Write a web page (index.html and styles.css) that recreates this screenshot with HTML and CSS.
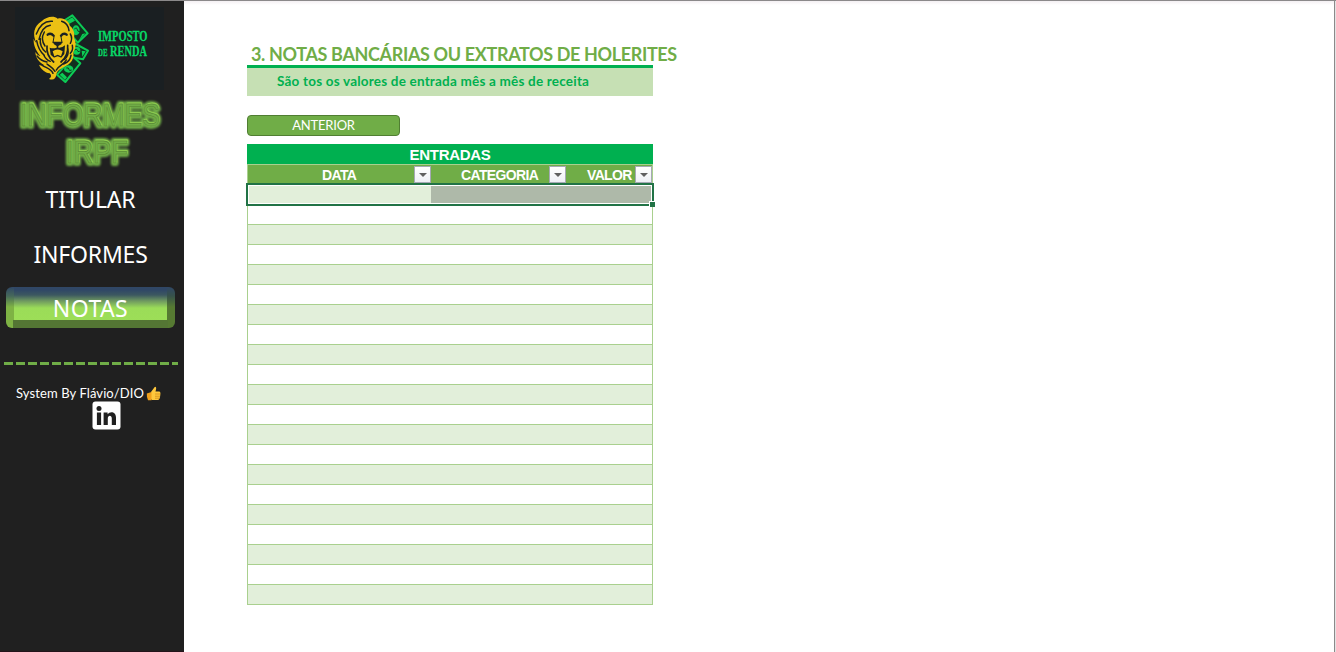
FILE: index.html
```html
<!DOCTYPE html>
<html lang="pt-BR">
<head>
<meta charset="utf-8">
<title>Informes IRPF</title>
<link rel="stylesheet" href="styles.css">
</head>
<body>
<div class="app">
  <aside class="sidebar">
    <svg class="logo" viewBox="15 7 149 83" width="149" height="83">
      <g transform="translate(25 8) scale(.33333)">
        <g fill="#12301f" stroke="#0ccb55" stroke-width="6" stroke-linejoin="round">
          <path d="M120 36L142 22L188 76L158 104L126 66Z"/>
          <path d="M142 112L152 108L189 128L174 154L140 148Z"/>
          <path d="M96 200L144 146L166 166L121 222Z"/>
        </g>
        <g fill="#0ccb55">
          <ellipse cx="153" cy="67" rx="11" ry="15"/>
          <ellipse cx="155" cy="128" rx="11" ry="12"/>
          <ellipse cx="131" cy="183" rx="14" ry="11"/>
          <path d="M124 38L142 28L150 38L132 48ZM172 78L182 76L160 100ZM170 128L182 130L172 146ZM104 200L112 194L126 208L120 216Z"/>
        </g>
        <path d="M148 63q8-6 9 2t8 5M149 126q7-5 8 1t7 3M124 180q8-2 8 4t8 2" fill="none" stroke="#17301f" stroke-width="3"/>
        <path fill="#ecc014" d="M50 40C64 26 86 22 98 32C116 27 132 40 135 54C146 62 150 78 147 90C156 106 151 122 145 132C148 152 138 166 126 172C112 180 96 186 94 200C92 212 86 218 72 213C80 208 80 202 74 196C60 194 48 184 42 170C50 174 54 174 58 172C42 162 32 150 31 132C36 140 42 144 46 144C32 126 25 112 26 92C28 97 30 101 34 104C22 80 26 54 50 40Z"/>
        <g fill="none" stroke="#1a2023" stroke-width="4.5" stroke-linecap="round">
          <path d="M82 40C62 38 44 52 34 78M76 52C60 54 48 68 42 94M35 98C38 116 46 132 58 142M46 92C44 108 50 122 62 132M58 72C50 86 50 100 60 114M36 144C44 154 54 160 66 162M56 140C60 150 66 156 76 160M52 172C64 180 78 182 84 196M66 168C78 178 84 180 90 190M94 186C98 174 116 172 124 156M110 40C124 44 130 54 132 68M136 78C142 88 140 98 136 106M142 112C144 122 142 130 136 136M138 142C136 154 128 164 116 168M128 122C132 136 128 146 118 154"/>
          <path d="M68 80Q77 73 86 83M108 83Q116 73 125 80" stroke-width="7"/>
          <path d="M87 86L84 104M108 86L111 104" stroke-width="3"/>
          <path d="M66 114C64 132 72 150 86 162M128 112C130 132 124 148 108 162" stroke-width="5"/>
        </g>
        <path fill="#1a2023" d="M83 101H112L109 109L100 114V119Q112 120 120 112L118 138L108 150H88L77 140L74 119Q84 122 95 119V114L87 109Z"/>
        <path fill="#ecc014" d="M83 130Q97 119 113 130L108 145L98 140L88 145Z"/>
        <path fill="#ecc014" d="M84 150L98 145L111 150L98 166Z"/>
      </g>
      <g fill="#08d866" stroke="#08d866" stroke-width=".3" font-family="Liberation Serif, serif" font-weight="700">
        <text x="98" y="41" font-size="15" textLength="49.5" lengthAdjust="spacingAndGlyphs">IMPOSTO</text>
        <text x="98" y="56" font-size="10" textLength="9.5" lengthAdjust="spacingAndGlyphs">DE</text>
        <text x="110" y="56" font-size="15" textLength="37" lengthAdjust="spacingAndGlyphs">RENDA</text>
      </g>
    </svg>
    <svg class="brand" width="184" height="84" viewBox="0 90 184 84">
      <defs>
        <filter id="glow" x="-10%" y="-20%" width="120%" height="140%">
          <feGaussianBlur stdDeviation="1.2"/>
        </filter>
      </defs>
      <g class="brand-glow" filter="url(#glow)" aria-hidden="true">
        <text x="20" y="126" textLength="140" lengthAdjust="spacingAndGlyphs">INFORMES</text>
        <text x="66" y="163" textLength="62" lengthAdjust="spacingAndGlyphs">IRPF</text>
      </g>
      <g class="brand-light" aria-hidden="true">
        <text x="20.6" y="124.8" textLength="140" lengthAdjust="spacingAndGlyphs">INFORMES</text>
        <text x="66.6" y="161.8" textLength="62" lengthAdjust="spacingAndGlyphs">IRPF</text>
      </g>
      <g class="brand-face">
        <text x="20" y="125.5" textLength="140" lengthAdjust="spacingAndGlyphs">INFORMES</text>
        <text x="66" y="162.5" textLength="62" lengthAdjust="spacingAndGlyphs">IRPF</text>
      </g>
    </svg>
    <nav class="menu">
      <a class="item titular">TITULAR</a>
      <a class="item informes">INFORMES</a>
      <a class="item active">NOTAS</a>
    </nav>
    <div class="rule"></div>
    <div class="credit">
      <span class="credit-text">System By Flávio/DIO</span>
      <svg width="15" height="15" viewBox="0 0 15 15">
        <path d="M5 6L8.5 1.2Q9.2.2 10 1.2Q10.6 2 9.5 5.4H13.2Q14.4 5.5 14.4 7Q14.3 13.6 12 14H6L5 13Z" fill="#ffc83d"/>
        <path d="M.8 7.5L5.5 6V14.3H2Q.6 12 .8 7.5Z" fill="#f0a01c"/>
        <path d="M9 8H14.3M9 10.2H14M9 12.2H13.4" stroke="#c98214" stroke-width=".7"/>
      </svg>
    </div>
    <svg class="linkedin" width="29" height="29" viewBox="0 0 29 29">
      <rect x=".5" y=".5" width="28" height="28" rx="3" fill="#fff"/>
      <circle cx="7" cy="7.4" r="2.5" fill="#202020"/>
      <path d="M4.9 11.5H9.1V24H4.9ZM11.6 11.5H15.6V13.2C17.9 9.9 24 10.4 24 16.4V24H19.8V17.4C19.8 13.8 15.8 13.9 15.8 17.4V24H11.6Z" fill="#202020"/>
    </svg>
  </aside>
  <main class="sheet">
    <h1>3. NOTAS BANCÁRIAS OU EXTRATOS DE HOLERITES</h1>
    <p class="subtitle">São tos os valores de entrada mês a mês de receita</p>
    <button class="previous">ANTERIOR</button>
    <section class="table">
      <div class="caption">ENTRADAS</div>
      <div class="head">
        <div class="cell data"><span>DATA</span><i class="filter"></i></div>
        <div class="cell category"><span>CATEGORIA</span><i class="filter"></i></div>
        <div class="cell value"><span>VALOR</span><i class="filter"></i></div>
      </div>
      <div class="selected"><div class="current"></div><div class="marked"></div><i class="handle"></i></div>
      <div class="rows">
        <div></div><div></div><div></div><div></div><div></div>
        <div></div><div></div><div></div><div></div><div></div>
        <div></div><div></div><div></div><div></div><div></div>
        <div></div><div></div><div></div><div></div><div></div>
      </div>
    </section>
  </main>
</div>
</body>
</html>
```
FILE: styles.css
```css
* { box-sizing: border-box; }
body { margin: 0; background: #fff; font-family: Lato, sans-serif; overflow: hidden; }
.app { display: flex; width: 1336px; height: 652px; border-top: 1px solid #8b898a; }
.sidebar { width: 184px; background: #202020; display: flex; flex-direction: column; flex: none; border-bottom: 1px solid #23141a; }
.logo { margin: 6px 0 0 15px; background: #1a1f22; flex: none; overflow: visible; }
.brand { flex: none; font-family: "Liberation Sans", Arial, sans-serif; font-size: 31px; }
.brand-glow { fill: #70ad47; stroke: #70ad47; stroke-width: 6; stroke-linejoin: round; }
.brand-light { fill: none; stroke: #92d050; stroke-width: .8; }
.brand-face { fill: #70ad47; stroke: #55822f; stroke-width: .5; }
.menu { display: flex; flex-direction: column; color: #fff; font-family: "Noto Sans", sans-serif; font-size: 23px; line-height: 40px; padding-top: 5px; }
.item { height: 40px; text-align: center; width: 181px; letter-spacing: -.2px; }
.informes { margin: 15px 0 13px; }
.item.active {
  width: 169px; height: 41px; margin-left: 6px; border-radius: 6px;
  line-height: 43px; letter-spacing: .4px;
  background:
    linear-gradient(#547634, #547634) 50% 100% / 155px 8px no-repeat,
    linear-gradient(#304766, #46685a 9px, #7eb244 20px) 0 0 / 8px 100% no-repeat,
    linear-gradient(#304766, #37524a 9px, #567a32 20px) 100% 0 / 8px 100% no-repeat,
    linear-gradient(#304766 3px, #3c5860 8px, #6f9960 14px, #9bdc58 21px, #9edf57);
}
.rule { flex: none; height: 3px; margin: 34px 6px 0 4px; background: repeating-linear-gradient(90deg, #70ad47 0 9.5px, transparent 9.5px 12px); }
.credit { display: flex; align-items: center; height: 18px; margin: 19px 0 0 16px; color: #fff; font-size: 13px; letter-spacing: .1px; gap: 1px; }
.credit-text { white-space: nowrap; width: 129px; }
.linkedin { flex: none; margin: -1px 0 0 92px; }
.sheet { flex: 1; padding: 42px 0 0 63px; border-right: 1px solid #e4e4e4; box-shadow: inset -1px 0 #8b898a; background: linear-gradient(#f4f0f3, #fff 4px); }
h1 { margin: 0; padding-left: 4px; height: 22px; line-height: 22px; font-size: 18px; letter-spacing: -.36px; color: #70ad47; white-space: nowrap; }
.subtitle { width: 406px; height: 31px; margin: 0; padding-left: 30px; border-top: 3px solid #00b050; background: #c6e0b4; color: #00b050; font-size: 13.5px; letter-spacing: .2px; line-height: 27px; font-weight: 700; white-space: nowrap; }
.previous { display: block; width: 153px; height: 21px; margin: 19px 0 8px; padding: 0; border: 1px solid #507e32; border-radius: 4px; background: #70ad47; color: #fff; font: 13px/19px Lato, sans-serif; letter-spacing: -.2px; }
.table { width: 406px; font-family: "Liberation Sans", Arial, sans-serif; font-size: 14px; font-weight: 700; color: #fff; }
.caption { height: 20px; background: #00b050; line-height: 21px; font-size: 15px; letter-spacing: -.3px; text-align: center; }
.head { display: grid; grid-template-columns: 184px 135px 87px; height: 20px; background: #70ad47; border: 1px solid #a9d08e; border-bottom: 0; letter-spacing: -.65px; }
.cell { display: flex; align-items: center; justify-content: space-between; padding-right: 1px; }
.data { padding-left: 74px; }
.category { padding-left: 29px; }
.value { padding-left: 20px; padding-right: 2px; }
.filter { width: 17px; height: 17px; border: 1px solid #a6a9b5; background: linear-gradient(#fff, #eef0f5); display: grid; place-items: center; }
.filter::after { content: ""; border: 4px solid transparent; border-top-color: #606060; border-bottom: 0; }
.selected { position: relative; display: grid; grid-template-columns: 182px 1fr; height: 23px; margin: -1px -1px 0; padding: 1px; border: 2px solid #217346; width: 408px; background: #fff; }
.current { background: #e2efda; }
.marked { background: #aeb9a9; }
.handle { position: absolute; right: -3px; bottom: -3px; width: 6px; height: 6px; background: #217346; border: solid #fff; border-width: 1px 0 0 1px; }
.rows { border: 1px solid #a9d08e; border-width: 0 1px; }
.rows div { height: 20px; border-bottom: 1px solid #a9d08e; }
.rows div:first-child { height: 19px; }
.rows div:nth-child(even) { background: #e2efda; }
```
